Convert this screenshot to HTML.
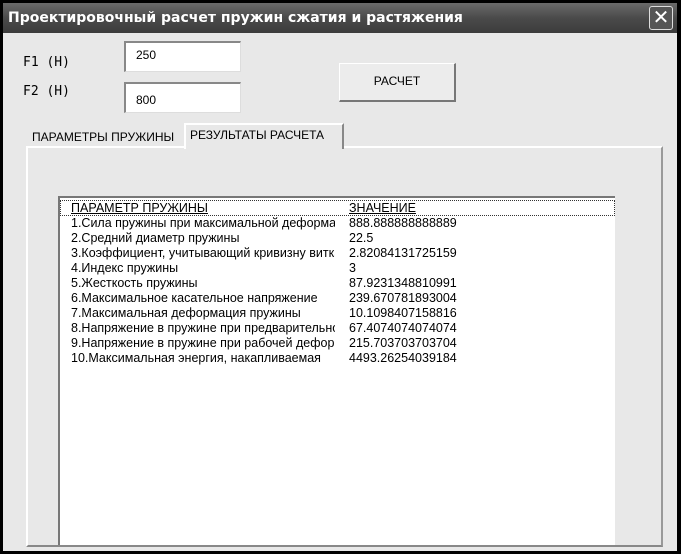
<!DOCTYPE html>
<html><head><meta charset="utf-8"><style>
*{margin:0;padding:0;box-sizing:border-box}
body{width:681px;height:554px;background:#000;position:relative;overflow:hidden;font-family:"Liberation Sans","DejaVu Sans",sans-serif;}
.win{position:absolute;left:3px;top:3px;width:674px;height:548px;background:#e8e8e8;}
.title{position:absolute;left:0;top:0;width:674px;height:30px;background:linear-gradient(#6a6a6a,#4a4a4a 50%,#3c3c3c);}
.title span{position:absolute;left:5px;top:7px;color:#fff;font-size:14px;font-weight:bold;font-family:"DejaVu Sans",sans-serif;}
.close{position:absolute;left:646px;top:3px;width:24px;height:24px;border:1px solid #ddd;border-radius:3px;background:#555;color:#fff;font-size:20px;line-height:21px;text-align:center;font-family:"DejaVu Sans",sans-serif;}
.lbl{position:absolute;font-size:13px;font-family:"DejaVu Sans Mono","Liberation Mono",monospace;color:#000;}
.tb{position:absolute;width:117px;height:31px;background:#fff;border-top:2px solid #888;border-left:2px solid #888;border-right:1px solid #ddd;border-bottom:1px solid #ddd;font-size:12px;padding:5px 0 0 10px;}
.btn{position:absolute;left:336px;top:60px;width:117px;height:39px;background:#ececec;border:1px solid #fff;border-right:2px solid #777;border-bottom:2px solid #777;font-size:12px;text-align:center;line-height:35px;}
.tab{position:absolute;font-size:12px;}
.panel{position:absolute;left:23px;top:143px;width:637px;height:401px;border-top:2px solid #fff;border-left:2px solid #fff;border-right:2px solid #999;border-bottom:2px solid #888;}
.list{position:absolute;left:55px;top:193px;width:557px;height:349px;background:#fff;border-left:2px solid #777;border-top:2px solid #777;}
.row{position:absolute;left:11px;font-size:12.5px;white-space:nowrap;}
.row b{font-weight:normal;display:inline-block;width:278px;vertical-align:top;}
.row b i{font-style:normal;display:inline-block;max-width:264px;overflow:hidden;vertical-align:top;}
</style></head><body>
<div class="win">
<div class="title"><span>Проектировочный расчет пружин сжатия и растяжения</span><div class="close">✕</div></div>
<div class="lbl" style="left:20px;top:52px">F1 (H)</div>
<div class="lbl" style="left:20px;top:81px">F2 (H)</div>
<div class="tb" style="left:121px;top:38px">250</div>
<div class="tb" style="left:121px;top:79px;padding-top:9px">800</div>
<div class="btn">РАСЧЕТ</div>
<div class="tab" style="left:29px;top:127px">ПАРАМЕТРЫ ПРУЖИНЫ</div>
<div class="panel"></div>
<div style="position:absolute;left:181px;top:120px;width:160px;height:26px;background:#e8e8e8;border-top:2px solid #fff;border-left:2px solid #fff;border-right:2px solid #888;"></div>
<div class="tab" style="left:187px;top:125px">РЕЗУЛЬТАТЫ РАСЧЕТА</div>
<div class="list">
<div style="position:absolute;left:0;top:2px;width:555px;height:16px;border:1px dotted #333;"></div>
<div class="row" style="top:3px"><b><i style="text-decoration:underline">ПАРАМЕТР ПРУЖИНЫ</i></b><span style="text-decoration:underline">ЗНАЧЕНИЕ</span></div>
<div class="row" style="top:18px"><b><i>1.Сила пружины при максимальной деформации</i></b>888.888888888889</div>
<div class="row" style="top:33px"><b><i>2.Средний диаметр пружины</i></b>22.5</div>
<div class="row" style="top:48px"><b><i>3.Коэффициент, учитывающий кривизну витка</i></b>2.82084131725159</div>
<div class="row" style="top:63px"><b><i>4.Индекс пружины</i></b>3</div>
<div class="row" style="top:78px"><b><i>5.Жесткость пружины</i></b>87.9231348810991</div>
<div class="row" style="top:93px"><b><i>6.Максимальное касательное напряжение</i></b>239.670781893004</div>
<div class="row" style="top:108px"><b><i>7.Максимальная деформация пружины</i></b>10.1098407158816</div>
<div class="row" style="top:123px"><b><i>8.Напряжение в пружине при предварительной</i></b>67.4074074074074</div>
<div class="row" style="top:138px"><b><i>9.Напряжение в пружине при рабочей деформации</i></b>215.703703703704</div>
<div class="row" style="top:153px"><b><i>10.Максимальная энергия, накапливаемая</i></b>4493.26254039184</div>
</div>
</div>
</body></html>
